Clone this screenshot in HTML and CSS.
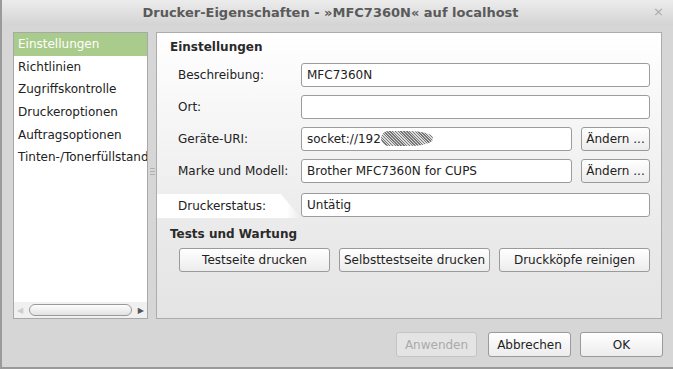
FILE: index.html
```html
<!DOCTYPE html>
<html lang="de">
<head>
    <meta charset="UTF-8">
    <title>Drucker-Eigenschaften</title>
    <link rel="stylesheet" href="styles.css">
</head>
<body>
    <div class="window">
        <header class="titlebar">
            <span class="title">Drucker-Eigenschaften - »MFC7360N« auf localhost</span>
            <span class="close">×</span>
        </header>

        <div class="content">
            <aside class="sidebar">
                <ul class="nav">
                    <li class="active">Einstellungen</li>
                    <li>Richtlinien</li>
                    <li>Zugriffskontrolle</li>
                    <li>Druckeroptionen</li>
                    <li>Auftragsoptionen</li>
                    <li>Tinten-/Tonerfüllstand</li>
                </ul>
                <div class="hscroll">
                    <span class="arrow left">◀</span>
                    <span class="thumb"></span>
                    <span class="arrow right">▶</span>
                </div>
            </aside>

            <div class="grip"><span></span><span></span><span></span></div>

            <section class="panel">
                <h2>Einstellungen</h2>
                <div class="form">
                    <label>Beschreibung:</label>
                    <div class="field wide">MFC7360N</div>

                    <label>Ort:</label>
                    <div class="field wide"></div>

                    <label>Geräte-URI:</label>
                    <div class="field">socket://192<span class="smudge"></span></div>
                    <button class="btn">Ändern ...</button>

                    <label>Marke und Modell:</label>
                    <div class="field">Brother MFC7360N for CUPS</div>
                    <button class="btn">Ändern ...</button>

                    <label class="status">Druckerstatus:</label>
                    <div class="field wide last">Untätig</div>
                </div>

                <h2 class="second">Tests und Wartung</h2>
                <div class="tests">
                    <button class="btn">Testseite drucken</button>
                    <button class="btn">Selbsttestseite drucken</button>
                    <button class="btn">Druckköpfe reinigen</button>
                </div>
            </section>
        </div>

        <footer class="actions">
            <button class="btn disabled">Anwenden</button>
            <button class="btn">Abbrechen</button>
            <button class="btn">OK</button>
        </footer>
    </div>
</body>
</html>
```

FILE: styles.css
```css
* {
    margin: 0;
    padding: 0;
    box-sizing: border-box;
}

body {
    font-family: 'DejaVu Sans', sans-serif;
    font-size: 12px;
    color: #222;
    background-color: #d6d6d6;
}

.window {
    width: 673px;
    height: 369px;
    background-color: #d6d6d6;
    border-left: 2px solid #9a9a9a;
    border-bottom: 2px solid #9a9a9a;
    display: flex;
    flex-direction: column;
}

.titlebar {
    height: 25px;
    background: linear-gradient(#ececec, #d4d4d4);
    display: flex;
    align-items: center;
    justify-content: center;
    position: relative;
}

.title {
    font-weight: bold;
    font-size: 13px;
    color: #5a5a5a;
    margin-left: -14px;
}

.close {
    position: absolute;
    right: 9px;
    top: 4px;
    color: #aaa;
    font-size: 13px;
}

.content {
    display: flex;
    padding: 7px 11px 0 11px;
    height: 294px;
}

.sidebar {
    width: 135px;
    height: 287px;
    border: 1px solid #a8a8a8;
    background: white;
    display: flex;
    flex-direction: column;
}

.nav {
    list-style: none;
    flex: 1;
    overflow: hidden;
}

.nav li {
    height: 22.7px;
    line-height: 22px;
    padding-left: 4px;
    white-space: nowrap;
    color: #222;
}

.nav li.active {
    background-color: #a9cb8b;
    color: white;
}

.hscroll {
    height: 16px;
    background: #f0f0f0;
    display: flex;
    align-items: center;
    padding: 0 3px;
    gap: 6px;
}

.arrow {
    font-size: 8px;
    color: #555;
}

.arrow.left {
    color: #ccc;
}

.thumb {
    flex: 1;
    height: 12px;
    border: 1px solid #999;
    border-radius: 6px;
    background: linear-gradient(#fdfdfd, #e2e2e2);
}

.grip {
    width: 8px;
    display: flex;
    flex-direction: column;
    justify-content: center;
    align-items: center;
    gap: 2px;
    padding-bottom: 8px;
}

.grip span {
    width: 5px;
    height: 1px;
    background: #b0b0b0;
}

.panel {
    flex: 1;
    height: 287px;
    border: 1px solid #acacac;
    background: linear-gradient(white, #eaeaea 70%, #e4e4e4);
    padding: 7px 10px 0 13px;
}

h2 {
    font-size: 12px;
    font-weight: bold;
    color: #2a2a2a;
    height: 16px;
}

h2.second {
    margin-top: 12px;
}

.form {
    display: grid;
    grid-template-columns: 135px 271px 69px;
    grid-template-rows: repeat(5, 24px);
    row-gap: 8px;
    column-gap: 9px;
    margin-top: 7px;
    margin-left: -13px;
}

.form label {
    padding-left: 21px;
    display: flex;
    align-items: center;
    height: 24px;
}

.form label.status {
    background: linear-gradient(to right, white 90%, transparent);
    clip-path: polygon(0 0, 86% 0, 100% 100%, 0 100%);
    margin-right: -9px;
    position: relative;
    top: 3px;
    height: 24px;
}

.field {
    border: 1px solid #9c9c9c;
    border-radius: 3px;
    background: white;
    height: 24px;
    line-height: 22px;
    padding-left: 5px;
    color: #222;
    white-space: nowrap;
    overflow: hidden;
}

.field.wide {
    grid-column: 2 / 4;
}

.field.last {
    margin-top: 2px;
}

.smudge {
    display: inline-block;
    width: 52px;
    height: 15px;
    vertical-align: -3px;
    border-radius: 8px 50% 50% 8px;
    background: repeating-linear-gradient(45deg, #777 0 1px, #ddd 1px 2px);
}

.btn {
    font-family: 'DejaVu Sans', sans-serif;
    font-size: 12px;
    color: #222;
    border: 1px solid #9a9a9a;
    border-radius: 3px;
    background: linear-gradient(white, #ececec);
    height: 24px;
}

.btn.disabled {
    color: #aaa;
    border-color: #c4c4c4;
    background: #e4e4e4;
}

.tests {
    display: flex;
    gap: 9px;
    margin-top: 5px;
    margin-left: 9px;
}

.tests .btn {
    width: 151px;
}

.actions {
    display: flex;
    justify-content: flex-end;
    gap: 9px;
    padding: 13px 10px 0 0;
}

.actions .btn {
    width: 83px;
    height: 25px;
}

.actions .btn.disabled {
    width: 81px;
    margin-right: 2px;
}
```
